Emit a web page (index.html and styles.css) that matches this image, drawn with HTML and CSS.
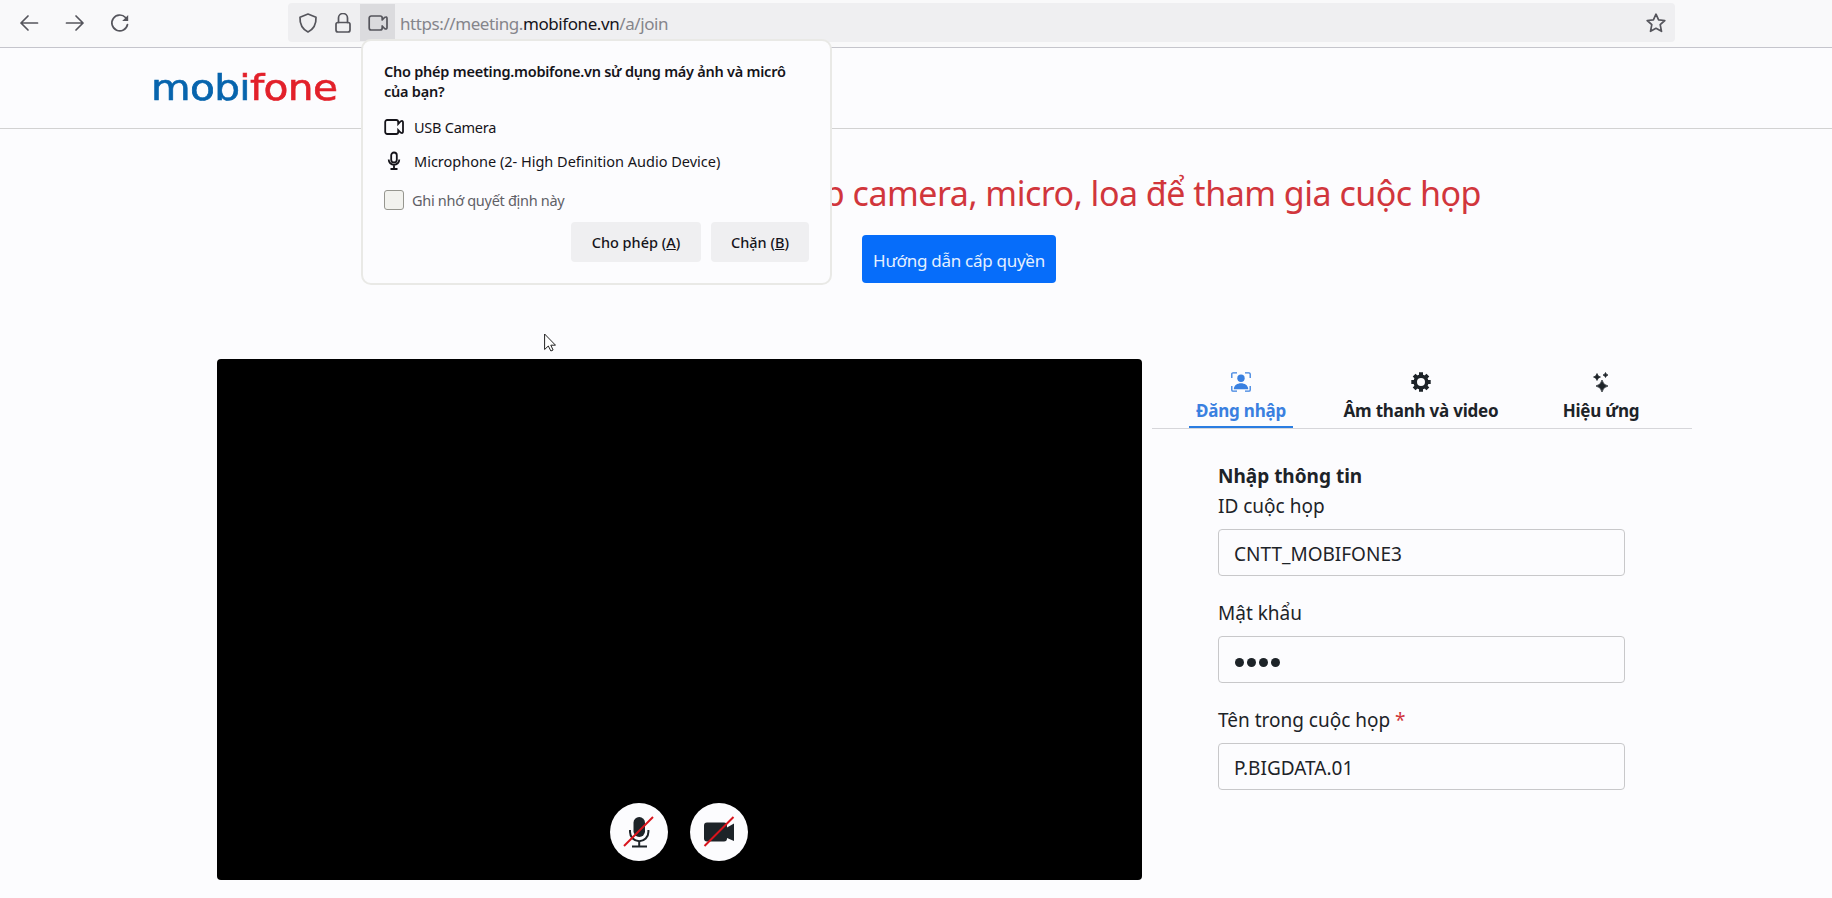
FILE: index.html
```html
<!DOCTYPE html>
<html lang="vi">
<head>
<meta charset="utf-8">
<title>MobiFone Meeting</title>
<link rel="stylesheet" href="styles.css">
</head>
<body>
<svg class="defs" aria-hidden="true">
  <symbol id="camera" viewBox="0 0 20 20"><path d="M3.200 3h9a2 2 0 0 1 2 2v2l2.300-2.500q2.500-1.400 2.500 1v9q0 2.400-2.500 1L14.200 13v2a2 2 0 0 1-2 2h-9a2 2 0 0 1-2-2V5a2 2 0 0 1 2-2z"/></symbol>
</svg>
<header class="toolbar">
  <nav class="nav">
    <svg class="icon" viewBox="0 0 20 20"><path d="M18.500 10H2M9 3L2 10l7 7"/></svg>
    <svg class="icon" viewBox="0 0 20 20"><path d="M1.500 10H18M11 3l7 7-7 7"/></svg>
    <svg class="icon" viewBox="0 0 20 20"><path d="M17.500 11.500A7.900 7.900 0 1 1 15.500 4.500"/><path class="solid" d="M18.200 2v6h-6z"/></svg>
  </nav>
  <div class="urlbar">
    <svg class="icon shield" viewBox="0 0 20 20"><path d="M10 1l8 3.200c.3 6-2.300 11.800-8 14.800-5.700-3-8.300-8.800-8-14.800z"/></svg>
    <svg class="icon lock" viewBox="0 0 20 20"><path d="M5.500 9.500V5a4.500 4.500 0 0 1 9 0v4.500"/><rect x="3" y="9.500" width="14" height="9.500" rx="2"/></svg>
    <span class="cam-cell"><svg class="icon"><use href="#camera"/></svg></span>
    <span class="url">https://meeting.<b>mobifone.vn</b>/a/join</span>
    <svg class="icon star" viewBox="0 0 20 20"><path d="M10 1.200l2.600 5.700 6.200.6-4.600 4.200 1.300 6.600-5.500-3-5.500 3 1.300-6.600L1.200 7.500l6.200-.6z"/></svg>
  </div>
</header>
<div class="site-header"><div class="logo"><span class="blue">mob</span><span class="dot">i</span><span class="red">fone</span></div></div>
<main>
  <section class="notice">
    <h1>cấp camera, micro, loa để tham gia cuộc họp</h1>
    <button class="guide">Hướng dẫn cấp quyền</button>
  </section>
  <section class="room">
    <div class="video">
      <span class="round"><svg viewBox="0 0 58 58"><rect x="23.500" y="14" width="11.500" height="20" rx="5.700" fill="#1d2328"/><path d="M20 27v2a9.200 9.200 0 0 0 18.400 0v-2M29.200 38.500V43M22 43.500h15" fill="none" stroke="#1d2328" stroke-width="2"/><path d="M14 43L43 14" stroke="#d8141c" stroke-width="2"/></svg></span>
      <span class="round"><svg viewBox="0 0 58 58"><path d="M17 19.500h17a3 3 0 0 1 3 3v2l7-4v17.500l-7-3v.500a3 3 0 0 1-3 3H17a3 3 0 0 1-3-3v-13a3 3 0 0 1 3-3z" fill="#1d2328"/><path d="M14.500 43L43.500 14" stroke="#d8141c" stroke-width="2"/></svg></span>
    </div>
    <aside class="panel">
      <div class="tabs">
        <div class="tab active"><svg viewBox="0 0 20 20"><path d="M.8 6V2Q.8.800 2 .8h4M14 .8h4q1.200 0 1.200 1.200v4M.8 14v4q0 1.200 1.200 1.200h4M19.200 14v4q0 1.200-1.200 1.200h-4" fill="none" stroke="currentColor" stroke-width="1.300"/><circle cx="10" cy="6.300" r="3.700"/><path d="M2.800 17.200c0-8 14.400-8 14.400 0z"/></svg><span>Đăng nhập</span></div>
        <div class="tab"><svg viewBox="0 0 20 20"><circle cx="10" cy="10" r="5.800" fill="none" stroke="currentColor" stroke-width="3.600"/><path d="M8 .3h4v3H8zM8 16.700h4v3H8zM.3 8h3v4h-3zM16.700 8h3v4h-3z"/><path transform="rotate(45 10 10)" d="M8 .3h4v3H8zM8 16.700h4v3H8zM.3 8h3v4h-3zM16.700 8h3v4h-3z"/></svg><span>Âm thanh và video</span></div>
        <div class="tab"><svg viewBox="0 0 20 20"><path d="M11 8q1 5 6 6-5 1-6 6-1-5-6-6 5-1 6-6zM6 1.500q.7 3 3.500 3.500-2.800.7-3.500 3.500-.7-2.800-3.500-3.500 2.800-.5 3.500-3.500zM14.500.5q.4 2 2.500 2.500-2.100.5-2.500 2.500-.4-2-2.500-2.500 2.100-.5 2.500-2.500z" stroke="currentColor" stroke-width=".7"/></svg><span>Hiệu ứng</span></div>
      </div>
      <form class="form">
        <h2>Nhập thông tin</h2>
        <label>ID cuộc họp</label><div class="field">CNTT_MOBIFONE3</div>
        <label>Mật khẩu</label><div class="field"><i></i><i></i><i></i><i></i></div>
        <label>Tên trong cuộc họp <em>*</em></label><div class="field">P.BIGDATA.01</div>
      </form>
    </aside>
  </section>
</main>
<div class="popup">
  <p class="ask">Cho phép meeting.mobifone.vn sử dụng máy ảnh và micrô<br>của bạn?</p>
  <div class="device usb"><svg><use href="#camera"/></svg><span>USB Camera</span></div>
  <div class="device"><svg viewBox="0 0 20 20"><rect x="7.200" y="1.500" width="5.600" height="10" rx="2.800"/><path d="M4.700 8.500a5.300 5.300 0 0 0 10.600 0M10 14v4M6.500 18h7"/></svg><span>Microphone (2- High Definition Audio Device)</span></div>
  <div class="remember"><span class="box"></span><span>Ghi nhớ quyết định này</span></div>
  <div class="actions"><button class="allow">Cho phép (<u>A</u>)</button><button class="block">Chặn (<u>B</u>)</button></div>
</div>
<svg class="cursor" viewBox="0 0 12 19"><path d="M.6 1v15.500l3.700-3.500 2.600 5 2.200-1-2.300-4.800h4.700z" fill="#fff" stroke="#222"/></svg>
</body>
</html>
```
FILE: styles.css
```css
* { box-sizing: border-box; }
body { margin: 0; height: 898px; overflow: hidden; position: relative; background: #fcfcfe; color: #1d2328; font-family: "Noto Sans", "Open Sans", sans-serif; }
p, h1, h2 { margin: 0; }
button { border: 0; font-family: inherit; padding: 0; }
.defs { position: absolute; width: 0; height: 0; }
.toolbar { height: 48px; padding-top: 3px; display: flex; background: #f9f9fa; border-bottom: 1px solid #c5c5cc; }
.icon { width: 20px; height: 20px; fill: none; stroke: #55555c; stroke-width: 1.700; stroke-linejoin: round; stroke-linecap: round; flex: none; }
.icon .solid { fill: #55555c; stroke: none; }
.nav { width: 288px; height: 39px; padding-left: 19px; display: flex; align-items: center; gap: 25.500px; }
.urlbar { width: 1387px; height: 39px; border-radius: 4px; background: #efeff1; display: flex; align-items: center; }
.shield { margin-left: 10px; }
.lock { margin-left: 15px; }
.cam-cell { width: 35px; height: 37px; margin-left: 7px; background: #dbdbde; display: flex; align-items: center; justify-content: center; }
.url { flex: 1; padding: 1px 0 0 5px; font-size: 17px; letter-spacing: -0.420px; color: #85858b; white-space: nowrap; }
.url b { font-weight: 400; color: #15141a; }
.star { margin-right: 9px; }
.site-header { height: 81px; padding: 17px 0 0 151px; border-bottom: 1px solid #d2d2d2; }
.logo { width: max-content; font: 36px/46px "DejaVu Sans", sans-serif; letter-spacing: -0.600px; -webkit-text-stroke-width: 0.600px; transform: scaleX(1.13); transform-origin: left; }
.blue { color: #0764ad; }
.dot { color: transparent; background: linear-gradient(#e2202a 13px, #0764ad 13px); -webkit-background-clip: text; background-clip: text; }
.red { color: #e2202a; }
.notice { height: 230px; padding-top: 40px; display: flex; flex-direction: column; align-items: center; }
h1 { align-self: flex-end; margin-right: 351px; height: 66px; font-size: 34px; line-height: 49px; letter-spacing: -0.500px; font-weight: 400; color: #d1363c; white-space: nowrap; }
.guide { width: 194px; height: 48px; border-radius: 4px; background: #066dfa; color: #e4f0ff; font-size: 17px; line-height: 51px; letter-spacing: -0.280px; margin-left: 86px; }
.room { display: flex; padding-left: 217px; gap: 10px; }
.video { width: 925px; height: 521px; border-radius: 4px; background: #000; display: flex; justify-content: center; gap: 22px; align-items: flex-end; padding: 0 2px 19px 0; }
.round { width: 58px; height: 58px; border-radius: 50%; background: #fcfcfe; }
.round svg { display: block; }
.panel { width: 540px; }
.tabs { display: flex; }
.tab { width: 180px; height: 70px; padding: 13px 2px 0 0; border-bottom: 1px solid #d6d6da; display: flex; flex-direction: column; align-items: center; font-size: 17px; font-weight: 700; line-height: 24px; letter-spacing: -0.210px; white-space: nowrap; }
.tab svg { width: 20px; height: 20px; margin-bottom: 7px; fill: currentColor; }
.tab.active { color: #3a80e0; }
.tab.active span { padding: 0 7px 3px; border-bottom: 2px solid #2a7de1; }
.form { padding: 33px 67px 0 66px; }
h2 { font-size: 19px; line-height: 29px; }
label { display: block; font-size: 19px; line-height: 30px; height: 38px; }
label em { font-style: normal; color: #d1363c; }
.field { height: 47px; margin-bottom: 22px; border: 1px solid #c8c8ca; border-radius: 4px; padding: 2px 0 0 15px; display: flex; align-items: center; gap: 3px; font-size: 19px; }
.field i { width: 9px; height: 9px; border-radius: 50%; background: #1d2328; margin-top: 4px; }
.field i:first-child { margin-left: 1px; }
.popup { position: absolute; left: 361px; top: 39px; width: 471px; height: 246px; border: 2px solid #e9e9e6; border-radius: 10px; background: #fcfcfe; padding: 20px 21px 0; color: #15141a; font-size: 14.500px; }
.ask { font-weight: 600; line-height: 20px; height: 49px; letter-spacing: -0.240px; white-space: nowrap; }
.device { height: 34px; display: flex; align-items: center; gap: 10px; white-space: nowrap; }
.device svg { width: 20px; height: 20px; fill: none; stroke: #15141a; stroke-width: 1.800; flex: none; }
.usb { letter-spacing: -0.250px; }
.remember { margin-top: 12px; height: 20px; display: flex; align-items: center; gap: 8px; letter-spacing: -0.300px; color: #606066; white-space: nowrap; }
.box { width: 20px; height: 20px; border: 1px solid #96968f; border-radius: 3px; background: #f2f2ee; }
.actions { display: flex; justify-content: flex-end; gap: 10px; margin-top: 12px; }
.actions button { height: 40px; border-radius: 4px; background: #efeff1; color: #15141a; font-size: 14.500px; font-weight: 500; }
.allow { width: 130px; }
.block { width: 98px; }
.cursor { position: absolute; left: 544px; top: 333px; width: 12px; height: 19px; }
```
